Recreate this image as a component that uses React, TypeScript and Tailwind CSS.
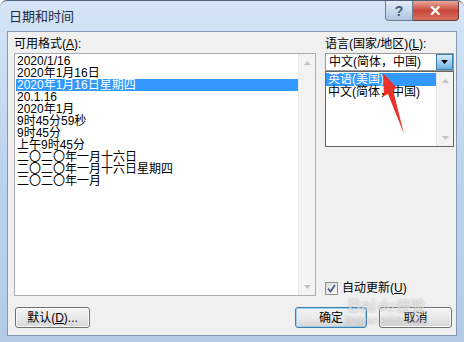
import React from "react";

const font = "font-['Liberation_Sans','Noto_Sans_CJK_SC',sans-serif]";

const formats = [
  "2020/1/16",
  "2020年1月16日",
  "2020年1月16日星期四",
  "20.1.16",
  "2020年1月",
  "9时45分59秒",
  "9时45分",
  "上午9时45分",
  "二〇二〇年一月十六日",
  "二〇二〇年一月十六日星期四",
  "二〇二〇年一月",
];

function Arrow({ up, dark }: { up?: boolean; dark?: boolean }) {
  return (
    <svg width="7" height="4" viewBox="0 0 7 4">
      <polygon
        points={up ? "0,4 7,4 3.5,0" : "0,0 7,0 3.5,4"}
        fill={dark ? "#000" : "#c4c4c4"}
      />
    </svg>
  );
}

function ScrollBar() {
  return (
    <div className="flex w-[17px] flex-col justify-between border-l border-[#e8e8e8] bg-[#f3f3f3]">
      <div className="flex h-[17px] items-center justify-center">
        <Arrow up />
      </div>
      <div className="flex h-[17px] items-center justify-center">
        <Arrow />
      </div>
    </div>
  );
}

function Btn({
  children,
  width,
  focused,
}: {
  children: React.ReactNode;
  width: string;
  focused?: boolean;
}) {
  return (
    <div
      className={`flex h-[21px] ${width} items-center justify-center rounded-[3px] border bg-gradient-to-b from-[#f4f4f4] via-[#e9e9e9] to-[#d6d6d6] leading-[14px] ${
        focused
          ? "border-[#3c7fb1] shadow-[inset_0_0_0_1px_#9fd0f0]"
          : "border-[#707070] shadow-[inset_0_0_0_1px_#fbfbfb]"
      }`}
    >
      {children}
    </div>
  );
}

export default function App() {
  return (
    <div
      className={`relative flex h-[342px] w-[464px] flex-col overflow-hidden rounded-t-[7px] border-t border-[#4e6078] bg-gradient-to-b from-[#d5e5f6] via-[#bcd3ec] to-[#b3cbe6] text-[12px] text-black ${font}`}
    >
      {/* Title bar */}
      <div className="flex h-[30px] items-start">
        <span className="ml-[9px] mt-[9px] text-[13px] leading-[14px] text-[#1e2a3a]">日期和时间</span>
        <div className="ml-auto mr-[5px] flex">
          <div className="flex h-[20px] w-[28px] items-center justify-center rounded-bl-[4px] border border-t-0 border-[#6a7d97] bg-gradient-to-b from-[#e3edf8] via-[#c9d9ec] to-[#aec4de] text-[14px] font-bold leading-none text-[#41597c]">
            ?
          </div>
          <div className="flex h-[20px] w-[46px] items-center justify-center rounded-br-[4px] border border-l-0 border-t-0 border-[#6b3b3b] bg-gradient-to-b from-[#e9a799] via-[#c8473a] to-[#d8705f] text-[15px] font-bold leading-none text-white">
            ✕
          </div>
        </div>
      </div>

      {/* Client area */}
      <div className="mx-[7px] flex h-[305px] flex-col border border-[#8499b4] bg-[#f0f0f0]">
        <div className="flex pl-[6px] pt-[5px]">
          {/* Left column */}
          <div className="flex w-[302px] flex-col">
            <div className="mb-[2px] h-[14px] leading-[14px]">
              可用格式(<span className="underline">A</span>):
            </div>
            <div className="flex h-[243px] border border-[#abadb3] bg-white">
              <div className="flex flex-1 flex-col pl-[1px] pt-[1px]">
                {formats.map((f, i) => (
                  <div
                    key={f}
                    className={`h-[12px] whitespace-nowrap pl-[1px] leading-[12px] ${
                      i === 2 ? "bg-[#3399ff] text-white" : ""
                    }`}
                  >
                    {f}
                  </div>
                ))}
              </div>
              <ScrollBar />
            </div>
          </div>

          {/* Right column */}
          <div className="ml-[9px] flex w-[129px] flex-col">
            <div className="mb-[2px] h-[14px] whitespace-nowrap leading-[14px]">
              语言(国家/地区)(<span className="underline">L</span>):
            </div>
            <div className="relative flex h-[18px] border border-[#9a9a9a] bg-white">
              <div className="flex-1 pl-[3px] leading-[16px]">中文(简体，中国)</div>
              <div className="flex w-[17px] items-center justify-center border border-[#3c7fb1] bg-gradient-to-b from-[#d6ecfb] via-[#a3d0f1] to-[#6aaee0]">
                <Arrow dark />
              </div>
              {/* Open dropdown */}
              <div className="absolute left-[-1px] top-[17px] flex h-[76px] w-[129px] border border-[#646464] bg-white">
                <div className="flex flex-1 flex-col pt-[1px]">
                  <div className="h-[13px] bg-[#3399ff] pl-[2px] leading-[13px] text-white">
                    英语(美国)
                  </div>
                  <div className="h-[13px] pl-[2px] leading-[13px]">中文(简体，中国)</div>
                </div>
                <ScrollBar />
              </div>
            </div>
            <div className="flex-1" />
            <div className="mb-[1px] flex h-[13px] items-center">
              <div className="flex h-[13px] w-[13px] items-center justify-center border border-[#8e8f8f] bg-gradient-to-br from-[#dcdcdc] to-white">
                <svg width="9" height="9" viewBox="0 0 9 9">
                  <path d="M1 4.5 L3.5 7.5 L8 1" stroke="#4a5e8c" strokeWidth="1.8" fill="none" />
                </svg>
              </div>
              <span className="ml-[4px] whitespace-nowrap leading-[13px]">
                自动更新(<span className="underline">U</span>)
              </span>
            </div>
          </div>
        </div>

        {/* Buttons */}
        <div className="mt-[11px] flex pl-[7px] pr-[4px]">
          <Btn width="w-[75px]">
            默认(<span className="underline">D</span>)...
          </Btn>
          <div className="ml-auto flex gap-[12px]">
            <Btn width="w-[72px]" focused>
              确定
            </Btn>
            <Btn width="w-[73px]">取消</Btn>
          </div>
        </div>
      </div>

      {/* Watermark */}
      <div className="pointer-events-none absolute left-[346px] top-[296px] flex flex-col items-center text-white/50 [text-shadow:0_0_2px_rgba(120,120,120,0.5)]">
        <div className="flex items-center gap-[2px] text-[18px] font-bold leading-[18px]">
          <span>Bai</span>
          <span className="text-[14px]">du</span>
          <span className="text-[14px]">经验</span>
        </div>
        <div className="text-[10px] leading-[12px] text-white/40">jingyan.baidu.com</div>
      </div>

      {/* Red arrow */}
      <div className="pointer-events-none absolute left-[380px] top-[70px] z-20 h-[66px] w-[28px]">
        <svg width="28" height="66" viewBox="380 70 28 66">
          <polygon points="383,72 397,87 393,89 404,133 388,93 384,95" fill="#e8322a" />
        </svg>
      </div>
    </div>
  );
}
